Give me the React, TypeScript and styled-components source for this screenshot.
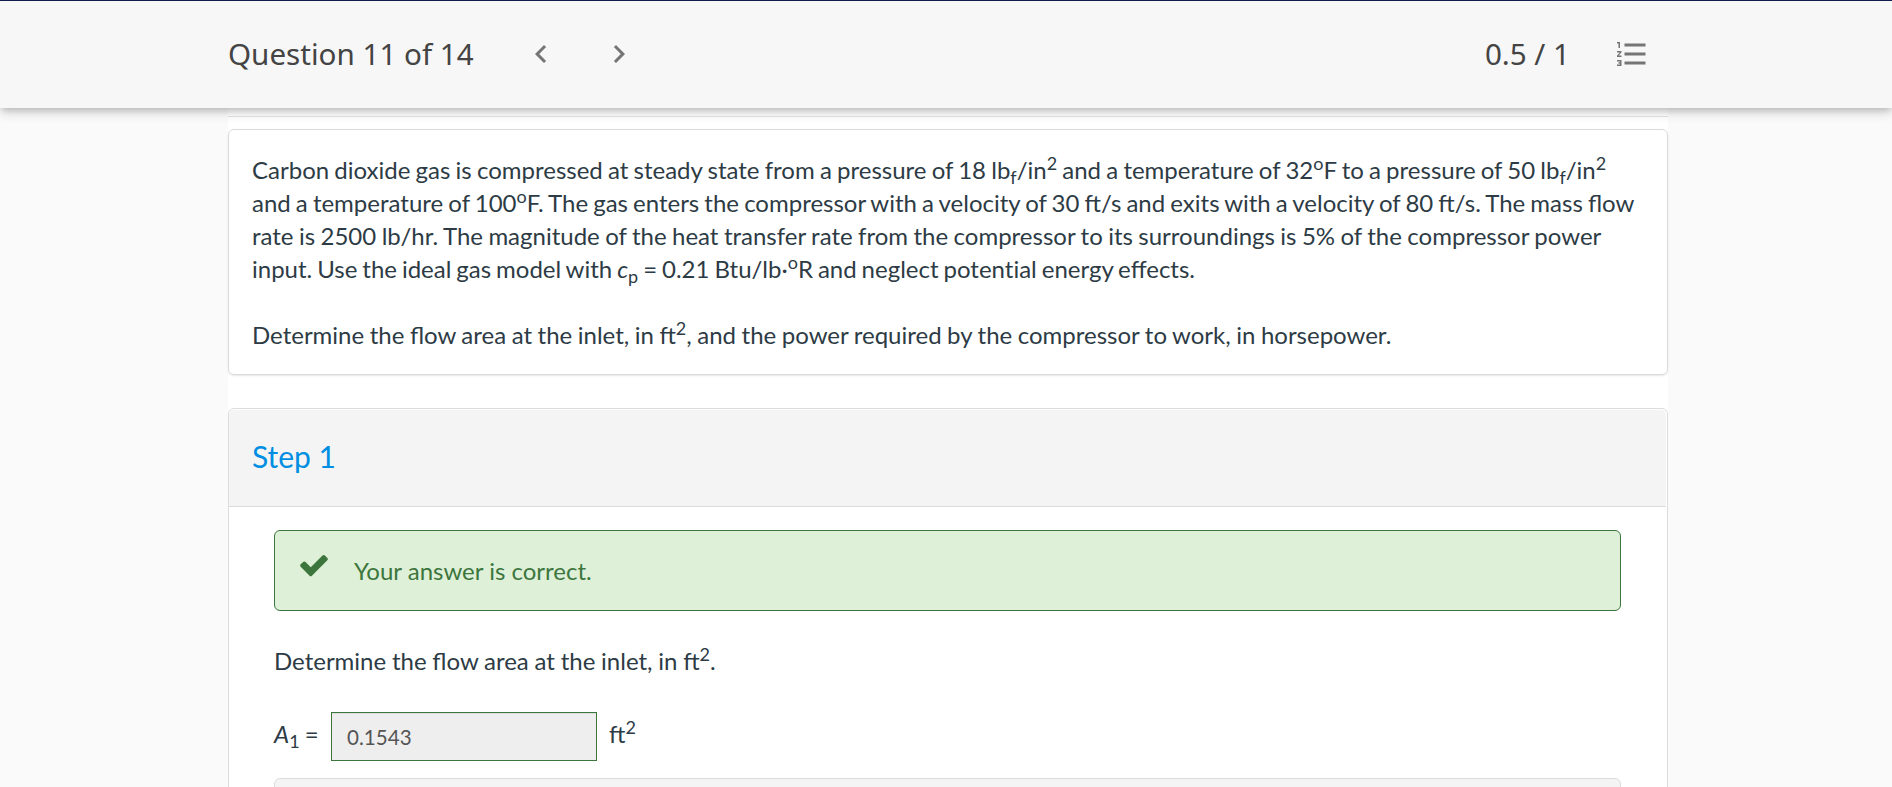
import React from "react";
import styled, { createGlobalStyle } from "styled-components";
import { MdChevronLeft, MdChevronRight, MdFormatListNumbered } from "react-icons/md";

const App: React.FC = () => {
  return (
    <>
      <GlobalStyle />
      <Page>
        <Header>
          <HeaderContent>
            <Title>Question 11 of 14</Title>
            <IconButton gap={45}>
              <MdChevronLeft />
            </IconButton>
            <IconButton gap={42}>
              <MdChevronRight />
            </IconButton>
            <Score>0.5 / 1</Score>
            <IconButton gap={44}>
              <MdFormatListNumbered />
            </IconButton>
          </HeaderContent>
        </Header>

        <Main>
          <Divider />
          <QuestionCard>
            <Paragraph>
              <Line tighten={0.95}>
                Carbon dioxide gas is compressed at steady state from a pressure of 18 lb<Sub>f</Sub>/in<Sup>2</Sup> and
                a temperature of 32<Sup>o</Sup>F to a pressure of 50 lb<Sub>f</Sub>/in<Sup>2</Sup>
              </Line>
              <Line tighten={1.04}>
                and a temperature of 100<Sup>o</Sup>F. The gas enters the compressor with a velocity of 30 ft/s and
                exits with a velocity of 80 ft/s. The mass flow
              </Line>
              <Line tighten={0.72}>
                rate is 2500 lb/hr. The magnitude of the heat transfer rate from the compressor to its surroundings is
                5% of the compressor power
              </Line>
              <Line tighten={1.2}>
                input. Use the ideal gas model with <em>c</em>
                <Sub>p</Sub> = 0.21 Btu/lb·<Sup>o</Sup>R and neglect <Plain>potential</Plain> energy effects.
              </Line>
            </Paragraph>
            <Paragraph>
              <Line tighten={0.62}>
                Determine the flow area at the inlet, in ft<Sup>2</Sup>, and the power required by the compressor to
                work, in horsepower.
              </Line>
            </Paragraph>
          </QuestionCard>

          <StepCard>
            <StepHeader>Step 1</StepHeader>
            <StepBody>
              <Alert>
                <CheckIcon viewBox="0 0 1792 1792">
                  <path d="M1671 566q0 40-28 68l-724 724-136 136q-28 28-68 28t-68-28l-136-136-362-362q-28-28-28-68t28-68l136-136q28-28 68-28t68 28l294 295 656-657q28-28 68-28t68 28l136 136q28 28 28 68z" />
                </CheckIcon>
                <span>Your answer is correct.</span>
              </Alert>
              <Paragraph>
                <Line tighten={0.4}>
                  Determine the flow area at the inlet, in ft<Sup>2</Sup>.
                </Line>
              </Paragraph>
              <AnswerRow>
                <Label>
                  <em>A</em>
                  <Sub>1</Sub> =
                </Label>
                <AnswerInput value="0.1543" readOnly />
                <Unit>
                  ft<Sup>2</Sup>
                </Unit>
              </AnswerRow>
              <NextPanel />
            </StepBody>
          </StepCard>
        </Main>
      </Page>
    </>
  );
};

export default App;


const GlobalStyle = createGlobalStyle`
  * {
    box-sizing: border-box;
  }

  body {
    margin: 0;
    overflow: hidden;
    background: #fafafa;
  }
`;

const Page = styled.div`
  display: flex;
  flex-direction: column;
  align-items: center;
  height: 787px;
  overflow: hidden;
  color: #2d3b45;
  font-family: Lato, "Liberation Sans", sans-serif;
  font-size: 24px;
  line-height: 33px;
`;

const Header = styled.header`
  position: relative;
  z-index: 1;
  display: flex;
  justify-content: center;
  flex-shrink: 0;
  width: 100%;
  height: 108px;
  padding-left: 4px;
  border-top: 1px solid #101c4b;
  background: #f7f7f7;
  box-shadow: 0 3px 6px -1.5px rgba(0, 0, 0, 0.15), 0 6px 9px rgba(0, 0, 0, 0.08), 0 1.5px 15px rgba(0, 0, 0, 0.1);
`;

const HeaderContent = styled.div`
  display: flex;
  align-items: center;
  width: 1440px;
  padding: 0 18px 2px 0;
  color: #444;
  font-family: "Noto Sans", sans-serif;
  font-size: 29.6px;
`;

const Title = styled.div`
  width: 250px;
  white-space: nowrap;
`;

const Score = styled.div`
  margin-left: auto;
  white-space: nowrap;
`;

const IconButton = styled.button<{ gap: number }>`
  display: flex;
  margin: 0 0 0 ${({ gap }) => gap}px;
  padding: 0;
  border: none;
  background: none;
  color: #757575;
  font-size: 36px;
  cursor: pointer;
`;

const Main = styled.main`
  flex: 1;
  width: 1440px;
  margin-left: 4px;
  background: #fff;
`;

const Divider = styled.div`
  height: 9px;
  border-bottom: 1px solid #e4e4e4;
`;

const QuestionCard = styled.section`
  display: flex;
  flex-direction: column;
  gap: 33px;
  height: 246px;
  margin-top: 12px;
  padding: 23px 23px;
  border: 1px solid #dcdcdc;
  border-radius: 6px;
  box-shadow: 0 1px 2px rgba(0, 0, 0, 0.1);
`;

const Paragraph = styled.p`
  margin: 0;
`;

const Line = styled.span<{ tighten: number }>`
  display: block;
  white-space: nowrap;
  word-spacing: ${({ tighten }) => -tighten}px;
`;

const Plain = styled.span`
  font-variant-ligatures: none;
`;

const Sup = styled.sup`
  position: relative;
  top: -0.5em;
  font-size: 75%;
  line-height: 0;
  vertical-align: baseline;
`;

const Sub = styled.sub`
  position: relative;
  bottom: -0.25em;
  font-size: 75%;
  line-height: 0;
  vertical-align: baseline;
`;

const StepCard = styled.section`
  height: 420px;
  margin-top: 33px;
  padding-top: 1px;
  border: 1px solid #dcdcdc;
  border-radius: 6px;
`;

const StepHeader = styled.div`
  display: flex;
  align-items: center;
  height: 97px;
  margin-right: 1px;
  padding: 0 23px 3px;
  border-bottom: 1px solid #dcdcdc;
  border-radius: 5px 5px 0 0;
  background: #f4f4f4;
  color: #008ee2;
  font-size: 30px;
`;

const StepBody = styled.div`
  padding: 23px 46px 0 45px;
`;

const Alert = styled.div`
  display: flex;
  align-items: center;
  height: 81px;
  margin-bottom: 33px;
  padding-left: 23px;
  border: 1px solid #3c763d;
  border-radius: 6px;
  background: #dff0d8;
  color: #3c763d;
`;

const CheckIcon = styled.svg`
  width: 32px;
  height: 32px;
  margin: -12px 24px 0 0;
  fill: currentColor;
`;

const AnswerRow = styled.div`
  display: flex;
  align-items: center;
  height: 49px;
  margin: 35px 0 17px;
`;

const Label = styled.label`
  width: 57px;
  margin-top: -6px;
  word-spacing: -1px;
`;

const AnswerInput = styled.input`
  width: 266px;
  height: 49px;
  padding: 1px 15px 0;
  border: 1px solid #3c763d;
  background: #eee;
  box-shadow: inset 0 1px 1px rgba(0, 0, 0, 0.075);
  color: #555;
  font-family: inherit;
  font-size: 20.6px;
`;

const Unit = styled.span`
  margin: -6px 0 0 12px;
`;

const NextPanel = styled.div`
  height: 60px;
  border: 1px solid #dcdcdc;
  border-radius: 6px;
  background: #f4f4f4;
`;
